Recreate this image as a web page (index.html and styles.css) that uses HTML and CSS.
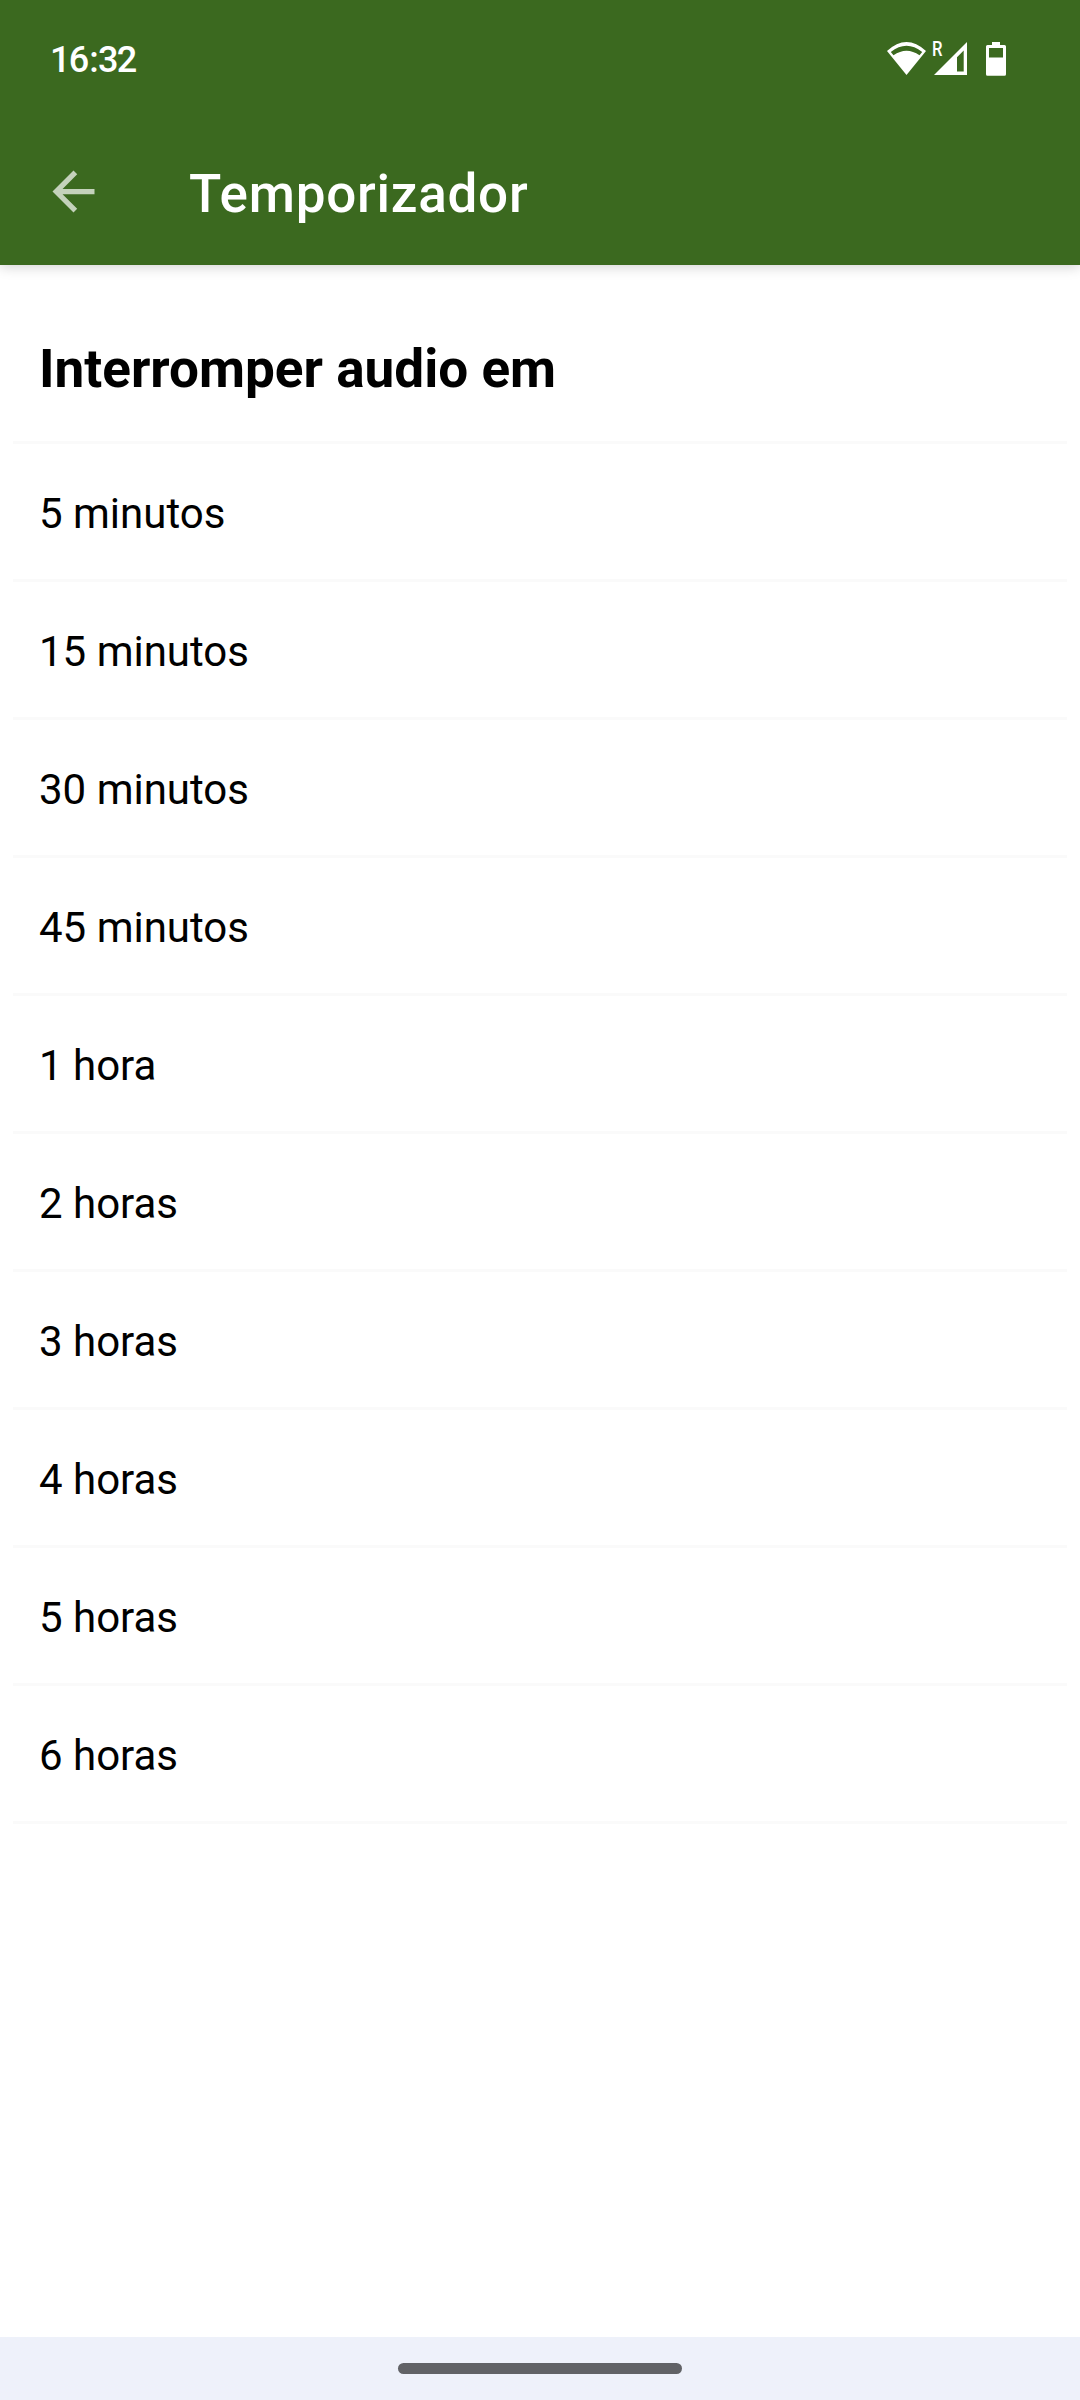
FILE: index.html
```html
<!DOCTYPE html>
<html lang="pt">
<head>
<meta charset="utf-8">
<title>Temporizador</title>
<link rel="stylesheet" href="styles.css">
</head>
<body>
<div class="screen">
  <header class="top">
    <div class="status">
      <span class="clock">16<span class="colon">:</span>32</span>
      <svg class="indicators" width="124" height="44" viewBox="886 37 124 44" fill="#fff" fill-rule="evenodd">
        <path d="M887 51Q906.5 33 926 51L906.5 75ZM890.8 52L893.5 55.3Q906.5 46 919.5 55.3L922.2 52Q906.5 39.3 890.8 52Z"/>
        <text class="roaming" x="932" y="55.7" textLength="10.5" lengthAdjust="spacingAndGlyphs">R</text>
        <path d="M967 42V75H934ZM963.7 50.5L957 57.2V71.5H963.7Z"/>
        <path d="M992 42h8v3h4.500q1.500 0 1.500 1.500v27.700q0 1.500-1.500 1.500h-17q-1.500 0-1.500-1.500v-27.700q0-1.500 1.500-1.500h4.500zM989 48v9.500h14v-9.500z"/>
      </svg>
    </div>
    <div class="bar">
      <svg class="back" width="63" height="63" viewBox="0 0 24 24"><path d="M20 11H7.830l5.590-5.590L12 4l-8 8 8 8 1.410-1.410L7.830 13H20z"/></svg>
      <h1 class="title">Temporizador</h1>
    </div>
  </header>
  <main class="content">
    <h2 class="heading">Interromper audio em</h2>
    <ul class="options">
      <li class="option">5 minutos</li>
      <li class="option">15 minutos</li>
      <li class="option">30 minutos</li>
      <li class="option">45 minutos</li>
      <li class="option">1 hora</li>
      <li class="option">2 horas</li>
      <li class="option">3 horas</li>
      <li class="option">4 horas</li>
      <li class="option">5 horas</li>
      <li class="option">6 horas</li>
    </ul>
  </main>
  <footer class="nav"><span class="handle"></span></footer>
</div>
</body>
</html>
```
FILE: styles.css
```css
* { box-sizing: border-box; margin: 0; padding: 0; }
body { font-family: Roboto, sans-serif; color: #000; background: #fff; }
.screen { height: 2400px; display: flex; flex-direction: column; }
.top { height: 265px; background: #3b691f; color: #fff; box-shadow: 0 2px 12px rgba(0,0,0,.18); }
.status { height: 118px; padding: 0 70px 0 50px; display: flex; justify-content: space-between; align-items: center; }
.clock { font: 500 36px Roboto, sans-serif; letter-spacing: -1.8px; padding-top: 1px; }
.colon { padding: 0 1px 0 2px; }
.roaming { font: 500 20px Roboto, sans-serif; }
.bar { height: 147px; padding-left: 42px; display: flex; align-items: center; }
.back { fill: #c4d2bb; }
.title { padding-top: 4px; margin-left: 84px; font-size: 53px; font-weight: 500; letter-spacing: .75px; }
.content { flex: 1; padding: 0 13px; }
.heading { height: 176px; padding: 73px 26px 0; font-size: 53.1px; line-height: 62px; }
.options { list-style: none; }
.option { height: 138px; border-top: 3px solid #fafafa; padding: 45px 26px 0; font-size: 42px; line-height: 50px; }
.option:last-child { border-bottom: 3px solid #fafafa; height: 141px; }
.nav { height: 63px; background: #eef1fa; display: flex; justify-content: center; align-items: center; }
.handle { width: 284px; height: 11px; border-radius: 6px; background: #616266; }
```
